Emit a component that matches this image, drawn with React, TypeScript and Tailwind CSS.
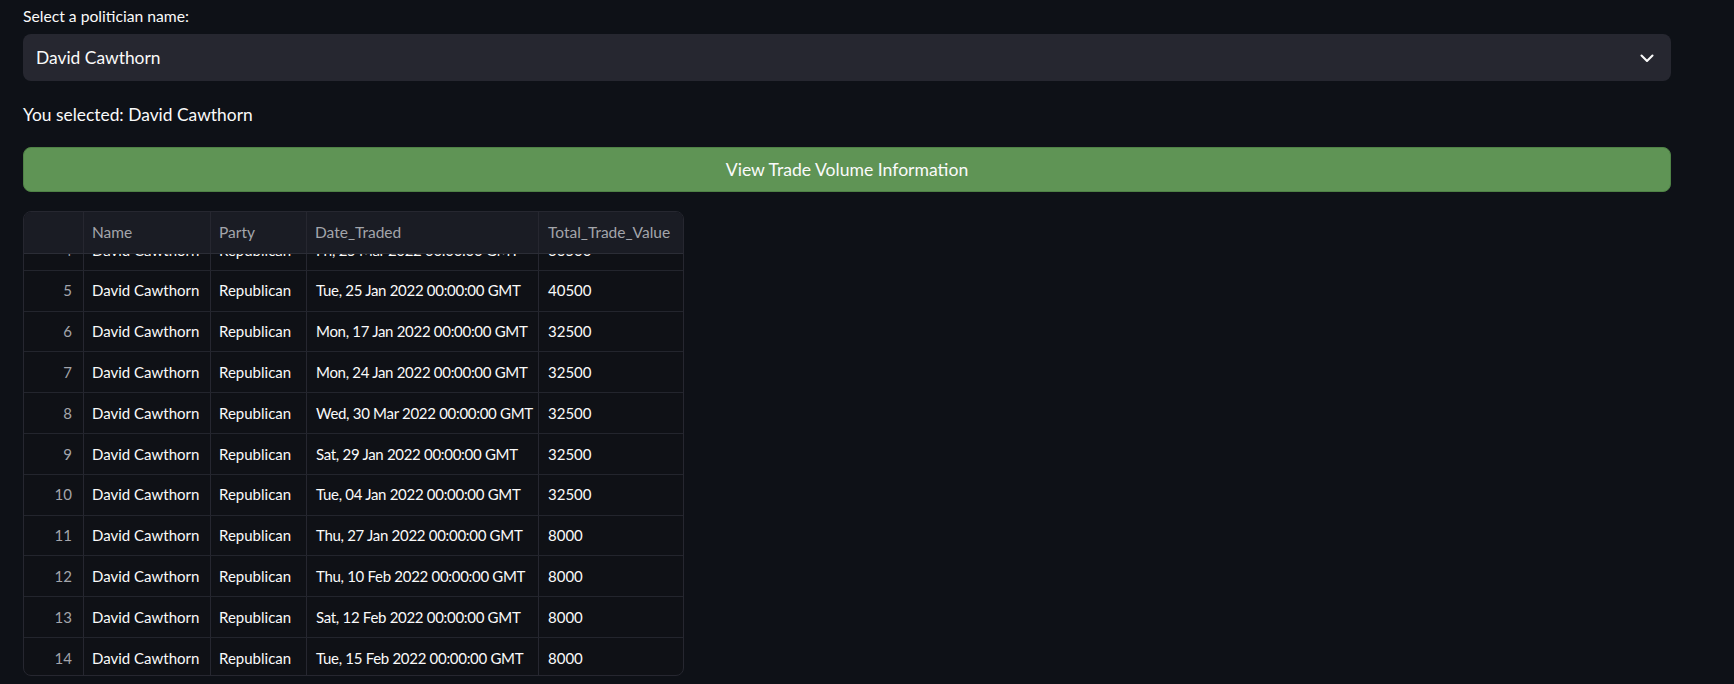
import React from "react";

const rows = [
  { i: 4, d: "Fri, 25 Mar 2022 00:00:00 GMT", v: "36500" },
  { i: 5, d: "Tue, 25 Jan 2022 00:00:00 GMT", v: "40500" },
  { i: 6, d: "Mon, 17 Jan 2022 00:00:00 GMT", v: "32500" },
  { i: 7, d: "Mon, 24 Jan 2022 00:00:00 GMT", v: "32500" },
  { i: 8, d: "Wed, 30 Mar 2022 00:00:00 GMT", v: "32500" },
  { i: 9, d: "Sat, 29 Jan 2022 00:00:00 GMT", v: "32500" },
  { i: 10, d: "Tue, 04 Jan 2022 00:00:00 GMT", v: "32500" },
  { i: 11, d: "Thu, 27 Jan 2022 00:00:00 GMT", v: "8000" },
  { i: 12, d: "Thu, 10 Feb 2022 00:00:00 GMT", v: "8000" },
  { i: 13, d: "Sat, 12 Feb 2022 00:00:00 GMT", v: "8000" },
  { i: 14, d: "Tue, 15 Feb 2022 00:00:00 GMT", v: "8000" },
];

const grid = "grid grid-cols-[60px_127px_96px_232px_145px]";

export default function App() {
  return (
    <div
      className="min-h-screen bg-[#0e1117] text-[#fafafa] px-[23px] pt-[6px]"
      style={{ fontFamily: "Lato, 'Noto Sans', sans-serif" }}
    >
      <div className="w-[1648px] flex flex-col">
        <label className="text-[15.7px] leading-[20px] h-[20px]">Select a politician name:</label>
        <div className="mt-[8px] h-[47px] rounded-[8px] bg-[#262730] flex items-center justify-between pl-[13px] pr-[12px]">
          <span className="text-[17.4px] leading-[24px]">David Cawthorn</span>
          <svg width="24" height="24" viewBox="0 0 24 24" fill="none" stroke="#fafafa" strokeWidth="2.1" strokeLinecap="round" strokeLinejoin="round">
            <path d="M6.5 9.5l5.5 5.5 5.5-5.5" />
          </svg>
        </div>
        <p className="mt-[22px] text-[17.4px] leading-[24px] h-[24px]">You selected: David Cawthorn</p>
        <button className="mt-[20px] h-[45px] rounded-[8px] bg-[#5f9455] border border-[#4f8246] flex items-center justify-center pt-[2px] text-[17.6px] text-[#fafafa]">
          View Trade Volume Information
        </button>
        <div className="mt-[19px] w-[661px] h-[465px] rounded-[8px] border border-[#262730] overflow-hidden relative bg-[#0f1116] text-[15px]">
          <div className={`${grid} h-[42px] bg-[#1a1c24] border-b border-[#2b2d36] text-[#a3a5ab] text-[15.5px] relative z-10`}>
            <div className="border-r border-[#262730]" />
            <div className="border-r border-[#262730] flex items-center pl-[8px]">Name</div>
            <div className="border-r border-[#262730] flex items-center pl-[8px]">Party</div>
            <div className="border-r border-[#262730] flex items-center pl-[8px]">Date_Traded</div>
            <div className="flex items-center pl-[9px]">Total_Trade_Value</div>
          </div>
          <div className="-mt-[24px]">
            {rows.map((r) => (
              <div key={r.i} className={`${grid} h-[40.8px] border-b border-[#23252d]`}>
                <div className="border-r border-[#262730] flex items-center justify-end pr-[11px] text-[#a3a5ab]">{r.i}</div>
                <div className="border-r border-[#262730] flex items-center pl-[8px] whitespace-nowrap">David Cawthorn</div>
                <div className="border-r border-[#262730] flex items-center pl-[8px] whitespace-nowrap">Republican</div>
                <div className="border-r border-[#262730] flex items-center pl-[9px] whitespace-nowrap tracking-[-0.3px]">{r.d}</div>
                <div className="flex items-center pl-[9px]">{r.v}</div>
              </div>
            ))}
          </div>
        </div>
      </div>
    </div>
  );
}
